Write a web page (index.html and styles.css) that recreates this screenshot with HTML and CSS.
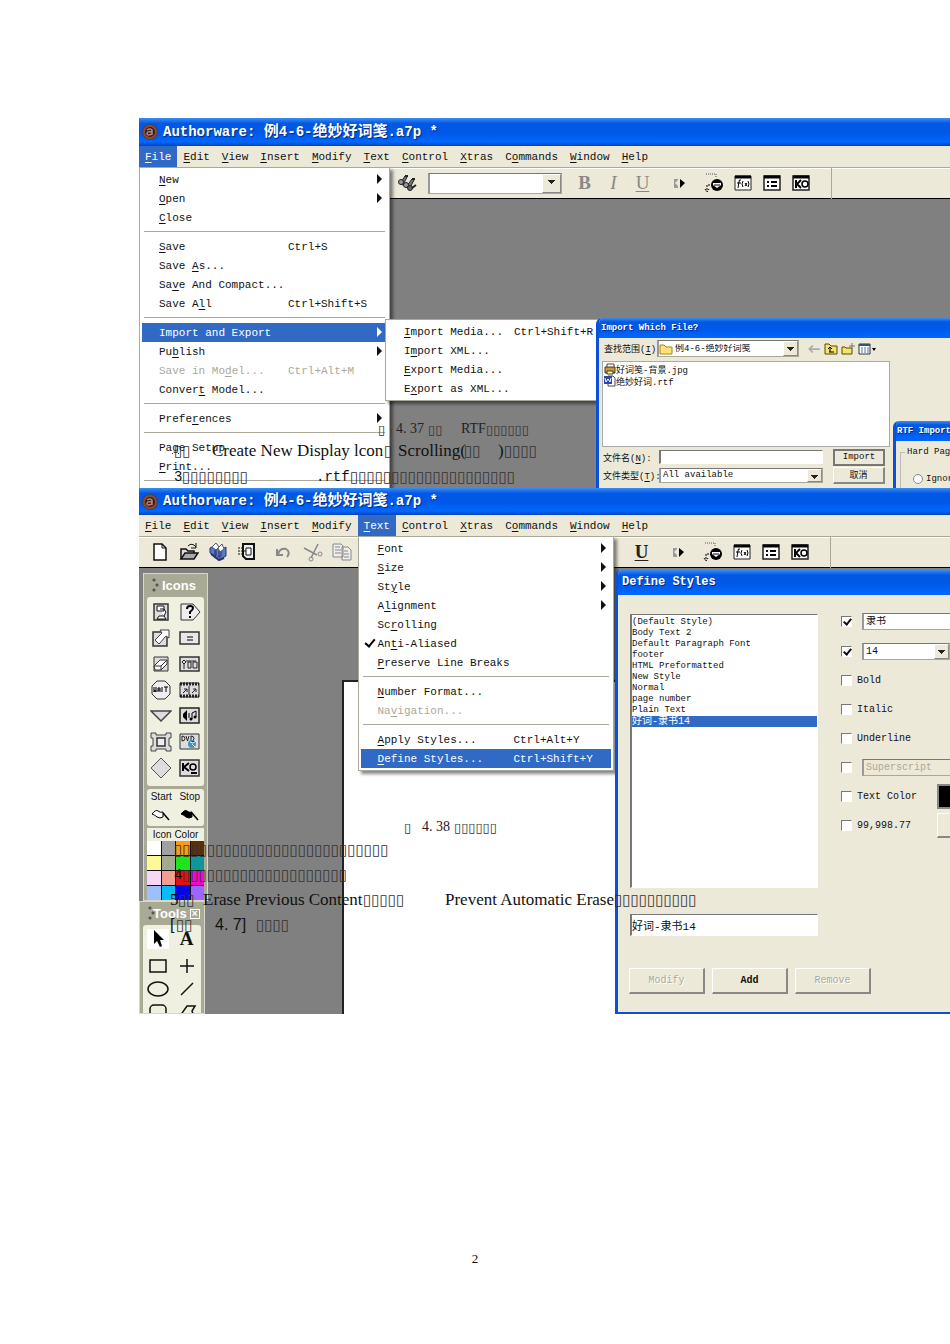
FILE: index.html
```
<!DOCTYPE html>
<html lang="zh-CN">
<head>
<meta charset="utf-8">
<title>Authorware</title>
<link rel="stylesheet" href="styles.css">
</head>
<body>
<svg class="defs" aria-hidden="true">
  <defs>
    <symbol id="logo" viewBox="0 0 18 18"><circle cx="9" cy="9" r="8" fill="#47414e"/><circle cx="9" cy="9" r="6" fill="#2b2024" stroke="#8a4a3c" stroke-width="2"/><path d="M6 7q3-2 5 0v5M11 9q-5-1-5 1.500t5 .5" fill="none" stroke="#c9826c" stroke-width="1.500"/></symbol>
    <symbol id="styles" viewBox="0 0 20 20"><path d="M3 11l5-8 2 1-4 8zM9 14l6-8 2 1-4 8z" fill="#777" stroke="#222"/><circle cx="4" cy="9" r="2.500" fill="#999" stroke="#222"/><circle cx="9" cy="12" r="2.500" fill="#999" stroke="#222"/><circle cx="13" cy="15" r="2.500" fill="#666" stroke="#222"/><path d="M8 3h3M15 6h3M15 15l4-3" stroke="#222" stroke-width="2"/></symbol>
    <symbol id="play" viewBox="0 0 16 14"><path d="M2 3h4v9H2z" fill="#999"/><path d="M7 3L3 7l4 4z" fill="#ece9d8"/><path d="M8 3l5 4-5 5z" fill="#000"/></symbol>
    <symbol id="flow" viewBox="0 0 20 20"><path d="M2 1h10v3" fill="none" stroke="#555" stroke-dasharray="1 1"/><path d="M3 12v6M1 16l2 3 2-3M4 12h3" fill="none" stroke="#000" stroke-dasharray="2 1"/><circle cx="13" cy="12" r="6" fill="#000"/><path d="M9 10h8v2l-4 3-4-3z" fill="#fff"/><path d="M10 12h6" stroke="#000"/></symbol>
    <symbol id="fx" viewBox="0 0 18 16"><path d="M1 1h16v14H1z" fill="#fff" stroke="#222"/><path d="M1 2h16" stroke="#000" stroke-width="3"/><path d="M7 5q-2-1-2 2l-1 6M3 8h4M9 6q-2 3 0 6M14 6q2 3 0 6M11 8l2 3M13 8l-2 3" fill="none" stroke="#000"/></symbol>
    <symbol id="vars" viewBox="0 0 18 16"><path d="M1 1h16v14H1z" fill="#fff" stroke="#222" stroke-width="1.500"/><path d="M1 2h16" stroke="#000" stroke-width="3"/><path d="M4 7h2M4 11h2M8 7h6M8 11h6" stroke="#000" stroke-width="2"/></symbol>
    <symbol id="ko" viewBox="0 0 18 16"><path d="M1 1h16v14H1z" fill="#fff" stroke="#222" stroke-width="1.500"/><path d="M1 2h16" stroke="#000" stroke-width="3"/><path d="M4 5v8M9 5L5 9l4 4" fill="none" stroke="#000" stroke-width="2"/><circle cx="13" cy="9" r="3" fill="none" stroke="#000" stroke-width="1.500"/></symbol>
    <symbol id="new" viewBox="0 0 20 20"><path d="M4 2h8l4 4v12H4z" fill="#fff" stroke="#111" stroke-width="1.500"/><path d="M12 2v4h4" fill="none" stroke="#111"/></symbol>
    <symbol id="open" viewBox="0 0 20 20"><path d="M2 17V7h5l2 2h6v3" fill="#ddd" stroke="#111" stroke-width="1.500"/><path d="M2 17l4-6h13l-4 6z" fill="#aaa" stroke="#111" stroke-width="1.500"/><path d="M9 4q4-4 8 1M17 1v5h-5" fill="none" stroke="#111"/></symbol>
    <symbol id="save" viewBox="0 0 20 20"><path d="M2 6l6-3v11l-6-3zM7 8l6-4v10l-6 2zM11 9l7-4v9l-7 4z" fill="#5b78c4" stroke="#26386f"/><path d="M4 5l4-4 3 4-3 3zM10 6l4-4 2 5-4 3z" fill="#fff" stroke="#557"/><path d="M3 12l8 6 5-2" fill="none" stroke="#26386f" stroke-width="2"/></symbol>
    <symbol id="import" viewBox="0 0 20 20"><path d="M6 2h11v15H9l-3-3z" fill="#eee" stroke="#111" stroke-width="2"/><path d="M9 6h5v7H9z" fill="#fff" stroke="#111"/><path d="M1 6h6M1 9h8M1 12h6" stroke="#111" stroke-dasharray="2 1"/></symbol>
    <symbol id="undo" viewBox="0 0 20 20"><path d="M4 12q2-6 8-5 5 3 1 8M3 7v6h6" fill="none" stroke="#888" stroke-width="2"/></symbol>
    <symbol id="cut" viewBox="0 0 20 20"><path d="M1 6l13 7M8 16l7-14" stroke="#888" stroke-width="1.500"/><circle cx="17" cy="12" r="2" fill="none" stroke="#888"/><circle cx="8" cy="17" r="2" fill="none" stroke="#888"/></symbol>
    <symbol id="copy" viewBox="0 0 20 20"><path d="M1 2h8l2 2v11H1zM10 5h6l3 3v10h-9z" fill="#eee" stroke="#888"/><path d="M3 5h5M3 8h6M3 11h6M12 9h4M12 12h5M12 15h5" stroke="#888"/></symbol>
    <symbol id="i-display" viewBox="0 0 22 20"><path d="M4 2h14v16H4z" fill="#ddd" stroke="#333" stroke-width="1.500"/><path d="M7 4h7v5H7zM10 7h4l2 3-2 4H9l-2 3h9l-2-3" fill="#fff" stroke="#111"/></symbol>
    <symbol id="i-ask" viewBox="0 0 22 20"><path d="M2 2h12l7 8-7 8H2z" fill="#eee" stroke="#333"/><path d="M8 7q0-3 3-3t3 2q0 2-3 4v2M11 14v2" fill="none" stroke="#000" stroke-width="2"/></symbol>
    <symbol id="i-motion" viewBox="0 0 22 20"><path d="M3 4h14v14H3z" fill="#ddd" stroke="#333" stroke-width="1.500"/><path d="M5 12l7-7-2-3h9v8l-3-2-7 8z" fill="#fff" stroke="#444"/></symbol>
    <symbol id="i-calc" viewBox="0 0 22 20"><path d="M1 4h19v12H1z" fill="#e8e8e8" stroke="#333" stroke-width="1.500"/><path d="M8 9h6M8 12h6" stroke="#000"/></symbol>
    <symbol id="i-erase" viewBox="0 0 22 20"><path d="M4 3h14v14H4z" fill="#ddd" stroke="#333"/><path d="M4 12l6-6h7v4l-6 6H5z" fill="#fff" stroke="#333"/><path d="M4 12h7l6-6M11 12v4" fill="none" stroke="#333"/></symbol>
    <symbol id="i-map" viewBox="0 0 22 20"><path d="M1 3h19v14H1z" fill="#ddd" stroke="#333" stroke-width="1.500"/><path d="M3 8l2-2 2 2-2 2zM5 10v5M9 8h3v6H9zM14 8h4v6h-4zM7 7h10" fill="none" stroke="#222"/></symbol>
    <symbol id="i-wait" viewBox="0 0 22 20"><path d="M7 1h8l5 5v8l-5 5H7l-5-5V6z" fill="#eee" stroke="#333"/><path d="M4 7v5l1-2 1 2V7M8 12V8h2v4M8 10h2M12 7v5M16 7v5M14 7h4" fill="none" stroke="#000"/></symbol>
    <symbol id="i-movie" viewBox="0 0 22 20"><path d="M1 3h19v14H1z" fill="#ddd" stroke="#222"/><path d="M1 4h19M1 16h19" stroke="#222" stroke-width="3" stroke-dasharray="2 1"/><path d="M10 6v9M4 13l4-4M5 9h3v3M13 13l4-4M14 9h3v3" fill="none" stroke="#222"/></symbol>
    <symbol id="i-nav" viewBox="0 0 22 20"><path d="M1 5h20L11 15z" fill="#ddd" stroke="#444" stroke-width="1.500"/></symbol>
    <symbol id="i-sound" viewBox="0 0 22 20"><path d="M1 2h19v15H1z" fill="#ddd" stroke="#222" stroke-width="1.500"/><path d="M4 8l4-4v11l-4-4z" fill="#000"/><path d="M10 7v5M13 13V7l4-2v6" fill="none" stroke="#000"/><circle cx="12" cy="13" r="1.500"/><circle cx="16" cy="11" r="1.500"/></symbol>
    <symbol id="i-frame" viewBox="0 0 22 20"><path d="M1 1h5v2h10V1h5v5h-2v8h2v5h-5v-2H6v2H1v-5h2V6H1z" fill="#ddd" stroke="#444"/><path d="M7 6h8v8H7z" fill="#eee" stroke="#333" stroke-width="1.500"/></symbol>
    <symbol id="i-dvd" viewBox="0 0 22 20"><path d="M1 2h19v15H1z" fill="#ddd" stroke="#333"/><path d="M3 4v5q3 0 3-2.500T3 4M7 4l1.500 5L10 4M12 4v5q3 0 3-2.500T12 4" fill="none" stroke="#222"/><circle cx="13" cy="12" r="4" fill="#3998c3"/><path d="M11 10l3 1 3-2M13 12l3 3" stroke="#fff"/></symbol>
    <symbol id="i-decide" viewBox="0 0 22 20"><path d="M11 0l10 10-10 10L1 10z" fill="#ddd" stroke="#555"/></symbol>
    <symbol id="i-ko" viewBox="0 0 22 20"><path d="M1 2h19v16H1z" fill="#ddd" stroke="#333" stroke-width="1.500"/><path d="M4 5v8M10 5L5 9l5 4M12 15h6" fill="none" stroke="#000" stroke-width="2"/><circle cx="14" cy="9" r="3" fill="none" stroke="#000" stroke-width="1.500"/></symbol>
    <symbol id="flag" viewBox="0 0 22 14"><path d="M2 6q4-5 6-3 2 2 5 1v5q-3 2-6 0-2-2-5-3z" stroke="#000"/><path d="M13 5l6 7" stroke="#000" stroke-width="1.500"/></symbol>
    <symbol id="t-arrow" viewBox="0 0 22 20"><path d="M7 1v14l3-3 3 6 2-1-2-6h4z" fill="#000"/></symbol>
    <symbol id="t-rect" viewBox="0 0 22 20"><path d="M3 4h16v12H3z" fill="none" stroke="#111" stroke-width="1.500"/></symbol>
    <symbol id="t-plus" viewBox="0 0 22 20"><path d="M4 10h14M11 3v14" stroke="#111" stroke-width="1.500"/></symbol>
    <symbol id="t-oval" viewBox="0 0 22 20"><ellipse cx="11" cy="10" rx="10" ry="7" fill="none" stroke="#111" stroke-width="1.500"/></symbol>
    <symbol id="t-line" viewBox="0 0 22 20"><path d="M5 16L17 4" stroke="#111" stroke-width="1.500"/></symbol>
    <symbol id="t-round" viewBox="0 0 22 20"><rect x="3" y="4" width="16" height="14" rx="4" fill="none" stroke="#111" stroke-width="1.500"/></symbol>
    <symbol id="t-poly" viewBox="0 0 22 20"><path d="M4 15L11 5h8l-3 5 3 8H5" fill="none" stroke="#111" stroke-width="1.500"/></symbol>
    <symbol id="folder" viewBox="0 0 14 12"><path d="M1 11V2h4l2 2h6v7z" fill="#ffe37a" stroke="#a98218"/></symbol>
    <symbol id="up" viewBox="0 0 14 12"><path d="M1 11V1h4l2 2h6v8z" fill="#f5e46b" stroke="#554a00"/><path d="M5 9h5M6 9V5M4 6l2-2 2 2" fill="none" stroke="#000"/></symbol>
    <symbol id="newdir" viewBox="0 0 14 12"><path d="M1 11V4h3l1 1h6v6z" fill="#f5e46b" stroke="#554a00"/><path d="M11 0v6M8 3h6" stroke="#776"/></symbol>
    <symbol id="back" viewBox="0 0 12 10"><path d="M11 5H2M5 2L2 5l3 3" fill="none" stroke="#aaa" stroke-width="1.500"/></symbol>
    <symbol id="view" viewBox="0 0 18 12"><path d="M1 1h11v10H1z" fill="#fff" stroke="#333"/><path d="M1 2h11" stroke="#357" stroke-width="2"/><path d="M3 5h8M3 7h8M3 9h8" stroke="#57a" stroke-dasharray="2 1"/><path d="M14 5h4l-2 3z"/></symbol>
    <symbol id="jpg" viewBox="0 0 12 12"><path d="M3 1h7v4H3z" fill="#fff" stroke="#543"/><path d="M1 4h10v6H1z" fill="#c69a3a" stroke="#432"/><path d="M3 8h6v3H3z" fill="#ff9" stroke="#432"/></symbol>
    <symbol id="rtf" viewBox="0 0 12 12"><path d="M4 1h5l2 2v8H4z" fill="#fff" stroke="#446"/><path d="M0 1h8v8H0z" fill="#2847a8"/><path d="M1 3l1 4 2-3 2 3 1-4" fill="none" stroke="#fff"/></symbol>
  </defs>
</svg>

<main class="sheet">
  <section class="figure">
    <div class="app app-import">
      <header class="titlebar"><svg class="logo"><use href="#logo"/></svg><h2>Authorware: <span class="zh">例</span>4-6-<span class="zh">绝妙好词笺</span>.a7p *</h2></header>
      <nav class="menubar">
        <div class="entry"><button class="top on"><u>F</u>ile</button>
          <div class="menu file-menu">
            <button class="item more"><span><u>N</u>ew</span></button>
            <button class="item more"><span><u>O</u>pen</span></button>
            <button class="item"><span><u>C</u>lose</span></button>
            <hr>
            <button class="item"><span><u>S</u>ave</span><kbd>Ctrl+S</kbd></button>
            <button class="item"><span>Save <u>A</u>s...</span></button>
            <button class="item"><span>Sa<u>v</u>e And Compact...</span></button>
            <button class="item"><span>Save A<u>l</u>l</span><kbd>Ctrl+Shift+S</kbd></button>
            <hr>
            <div class="entry">
              <button class="item more on"><span>Import and Export</span></button>
              <div class="menu submenu">
                <button class="item"><span><u>I</u>mport Media...</span><kbd>Ctrl+Shift+R</kbd></button>
                <button class="item"><span>I<u>m</u>port XML...</span></button>
                <button class="item"><span><u>E</u>xport Media...</span></button>
                <button class="item"><span>E<u>x</u>port as XML...</span></button>
              </div>
            </div>
            <button class="item more"><span>Pu<u>b</u>lish</span></button>
            <button class="item" disabled><span>Save in Mo<u>d</u>el...</span><kbd>Ctrl+Alt+M</kbd></button>
            <button class="item"><span>Conver<u>t</u> Model...</span></button>
            <hr>
            <button class="item more"><span>Prefe<u>r</u>ences</span></button>
            <hr>
            <button class="item"><span>Pa<u>g</u>e Setup</span></button>
            <button class="item"><span><u>P</u>rint...</span></button>
            <hr>
          </div>
        </div>
        <button class="top"><u>E</u>dit</button><button class="top"><u>V</u>iew</button><button class="top"><u>I</u>nsert</button><button class="top"><u>M</u>odify</button><button class="top"><u>T</u>ext</button><button class="top"><u>C</u>ontrol</button><button class="top"><u>X</u>tras</button><button class="top">C<u>o</u>mmands</button><button class="top"><u>W</u>indow</button><button class="top"><u>H</u>elp</button>
      </nav>
      <div class="toolbar">
        <div class="file-tools"></div>
        <button class="tool wide" aria-label="Styles"><svg><use href="#styles"/></svg></button>
        <span class="combo style-combo"><select aria-label="Style"><option></option></select></span>
        <button class="tool letter dim"><b>B</b></button><button class="tool letter dim"><i>I</i></button><button class="tool letter dim"><u>U</u></button>
        <div class="run-tools">
          <button class="tool first" aria-label="Restart"><svg><use href="#play"/></svg></button><button class="tool" aria-label="Control panel"><svg><use href="#flow"/></svg></button><button class="tool" aria-label="Functions"><svg><use href="#fx"/></svg></button><button class="tool" aria-label="Variables"><svg><use href="#vars"/></svg></button><button class="tool" aria-label="Knowledge objects"><svg><use href="#ko"/></svg></button>
        </div>
      </div>
      <div class="workspace">
        <section class="dialog import-dialog">
          <h3>Import Which File?</h3>
          <div class="import-body">
            <div class="look-row"><label for="look">查找范围(<u>I</u>):</label>
              <span class="combo look-combo"><svg><use href="#folder"/></svg><select id="look"><option>例4-6-绝妙好词笺</option></select></span>
              <button class="mini" aria-label="Back"><svg><use href="#back"/></svg></button><button class="mini" aria-label="Up"><svg><use href="#up"/></svg></button><button class="mini" aria-label="New folder"><svg><use href="#newdir"/></svg></button><button class="mini" aria-label="View"><svg><use href="#view"/></svg></button>
            </div>
            <ul class="files"><li><svg><use href="#jpg"/></svg>好词笺-背景.jpg</li><li><svg><use href="#rtf"/></svg>绝妙好词.rtf</li></ul>
            <div class="name-grid">
              <label for="fname">文件名(<u>N</u>):</label><input id="fname" class="field" type="text"><button class="push default">Import</button>
              <label for="ftype">文件类型(<u>T</u>):</label><span class="combo"><select id="ftype"><option>All available</option></select></span><button class="push">取消</button>
            </div>
          </div>
        </section>
        <section class="dialog rtf-dialog">
          <h3>RTF Import</h3>
          <fieldset><legend>Hard Page</legend><label class="radio"><input type="radio" name="brk">Ignore</label></fieldset>
        </section>
      </div>
    </div>
    <p class="line caption c437"><span class="box">▯</span><span>4. 37</span><span class="box">▯▯</span><span>RTF</span><span class="box">▯▯▯▯▯▯</span></p>
    <p class="line body l-create"><span class="box">▯▯</span><span>Create New Display lcon</span><span class="box">▯</span><span>Scrolling(</span><span class="box">▯▯</span><span>)</span><span class="box">▯▯▯▯</span></p>
    <p class="line body l-rtf"><span class="mono">3</span><span class="box">▯▯▯▯▯▯▯▯</span><span class="mono">.rtf</span><span class="box">▯▯▯▯▯▯▯▯▯▯▯▯▯▯▯▯▯▯▯▯</span></p>
  </section>

  <section class="figure">
    <div class="app app-styles">
      <header class="titlebar"><svg class="logo"><use href="#logo"/></svg><h2>Authorware: <span class="zh">例</span>4-6-<span class="zh">绝妙好词笺</span>.a7p *</h2></header>
      <nav class="menubar">
        <button class="top"><u>F</u>ile</button><button class="top"><u>E</u>dit</button><button class="top"><u>V</u>iew</button><button class="top"><u>I</u>nsert</button><button class="top"><u>M</u>odify</button>
        <div class="entry"><button class="top on"><u>T</u>ext</button>
          <div class="menu text-menu">
            <button class="item more"><span><u>F</u>ont</span></button>
            <button class="item more"><span><u>S</u>ize</span></button>
            <button class="item more"><span>St<u>y</u>le</span></button>
            <button class="item more"><span>A<u>l</u>ignment</span></button>
            <button class="item"><span>Sc<u>r</u>olling</span></button>
            <button class="item ticked"><span>An<u>t</u>i-Aliased</span></button>
            <button class="item"><span><u>P</u>reserve Line Breaks</span></button>
            <hr>
            <button class="item"><span><u>N</u>umber Format...</span></button>
            <button class="item" disabled><span>Na<u>v</u>igation...</span></button>
            <hr>
            <button class="item"><span><u>A</u>pply Styles...</span><kbd>Ctrl+Alt+Y</kbd></button>
            <button class="item on"><span><u>D</u>efine Styles...</span><kbd>Ctrl+Shift+Y</kbd></button>
          </div>
        </div>
        <button class="top"><u>C</u>ontrol</button><button class="top"><u>X</u>tras</button><button class="top">C<u>o</u>mmands</button><button class="top"><u>W</u>indow</button><button class="top"><u>H</u>elp</button>
      </nav>
      <div class="toolbar">
        <div class="file-tools">
          <button class="tool" aria-label="New"><svg><use href="#new"/></svg></button><button class="tool" aria-label="Open"><svg><use href="#open"/></svg></button><button class="tool" aria-label="Save all"><svg><use href="#save"/></svg></button><button class="tool" aria-label="Import"><svg><use href="#import"/></svg></button><button class="tool gap" aria-label="Undo"><svg><use href="#undo"/></svg></button><button class="tool" aria-label="Cut"><svg><use href="#cut"/></svg></button><button class="tool" aria-label="Copy"><svg><use href="#copy"/></svg></button>
        </div>
        <div class="under-menu"></div>
        <button class="tool letter strong"><u>U</u></button>
        <div class="run-tools">
          <button class="tool first" aria-label="Restart"><svg><use href="#play"/></svg></button><button class="tool" aria-label="Control panel"><svg><use href="#flow"/></svg></button><button class="tool" aria-label="Functions"><svg><use href="#fx"/></svg></button><button class="tool" aria-label="Variables"><svg><use href="#vars"/></svg></button><button class="tool" aria-label="Knowledge objects"><svg><use href="#ko"/></svg></button>
        </div>
      </div>
      <div class="workspace">
        <div class="canvas"></div>
        <aside class="palette icons">
          <h4>Icons</h4>
          <div class="cells">
            <svg><use href="#i-display"/></svg><svg><use href="#i-ask"/></svg>
            <svg><use href="#i-motion"/></svg><svg><use href="#i-calc"/></svg>
            <svg><use href="#i-erase"/></svg><svg><use href="#i-map"/></svg>
            <svg><use href="#i-wait"/></svg><svg><use href="#i-movie"/></svg>
            <svg><use href="#i-nav"/></svg><svg><use href="#i-sound"/></svg>
            <svg><use href="#i-frame"/></svg><svg><use href="#i-dvd"/></svg>
            <svg><use href="#i-decide"/></svg><svg><use href="#i-ko"/></svg>
          </div>
          <div class="flags"><span>Start</span><span>Stop</span><svg class="white"><use href="#flag"/></svg><svg><use href="#flag"/></svg></div>
          <div class="colour-title">Icon Color</div>
          <div class="colours"><i class="k1"></i><i class="k2"></i><i class="k3"></i><i class="k4"></i><i class="k5"></i><i class="k6"></i><i class="k7"></i><i class="k8"></i><i class="k9"></i><i class="k10"></i><i class="k11"></i><i class="k12"></i><i class="k13"></i><i class="k14"></i><i class="k15"></i><i class="k16"></i></div>
        </aside>
        <aside class="palette tools">
          <h4>Tools<button class="close" aria-label="Close">×</button></h4>
          <div class="cells">
            <svg class="picked"><use href="#t-arrow"/></svg><b class="letter-tool">A</b>
            <svg><use href="#t-rect"/></svg><svg><use href="#t-plus"/></svg>
            <svg><use href="#t-oval"/></svg><svg><use href="#t-line"/></svg>
            <svg><use href="#t-round"/></svg><svg><use href="#t-poly"/></svg>
          </div>
        </aside>
        <section class="dialog define-dialog">
          <h3>Define Styles</h3>
          <div class="define-body">
            <div class="left">
              <ul class="style-list"><li>(Default Style)</li><li>Body Text 2</li><li>Default Paragraph Font</li><li>footer</li><li>HTML Preformatted</li><li>New Style</li><li>Normal</li><li>page number</li><li>Plain Text</li><li class="on">好词-隶书14</li></ul>
              <input class="field style-name" type="text" aria-label="Style name" value="好词-隶书14">
            </div>
            <div class="options">
              <div class="opt"><input type="checkbox" checked aria-label="Use font"><span class="combo"><select aria-label="Font"><option>隶书</option></select></span></div>
              <div class="opt"><input type="checkbox" checked aria-label="Use size"><span class="combo size"><select aria-label="Size"><option>14</option></select></span></div>
              <label class="opt"><input type="checkbox">Bold</label>
              <label class="opt"><input type="checkbox">Italic</label>
              <label class="opt"><input type="checkbox">Underline</label>
              <div class="opt"><input type="checkbox" aria-label="Use script"><span class="combo off"><select disabled aria-label="Script"><option>Superscript</option></select></span></div>
              <div class="opt"><label><input type="checkbox">Text Color</label><span class="swatch"></span></div>
              <div class="opt"><label><input type="checkbox">99,998.77</label><button class="push fmt" aria-label="Format"></button></div>
            </div>
          </div>
          <div class="buttons"><button class="push" disabled>Modify</button><button class="push strong">Add</button><button class="push" disabled>Remove</button></div>
        </section>
      </div>
    </div>
    <p class="line caption c438"><span class="box">▯</span><span>4. 38</span><span class="box">▯▯▯▯▯▯</span></p>
    <p class="line body l-a"><span class="box">▯▯▯▯▯▯▯▯▯▯▯▯▯▯▯▯▯▯▯▯▯▯▯▯▯▯</span></p>
    <p class="line body l-b"><span class="mono">4</span><span class="box">▯▯▯▯▯▯▯▯▯▯▯▯▯▯▯▯▯▯▯▯</span></p>
    <p class="line body l-c"><span>5</span><span class="box">▯▯</span><span>Erase Previous Content</span><span class="box">▯▯▯▯▯</span><span>Prevent Automatic Erase</span><span class="box">▯▯▯▯▯▯▯▯▯▯</span></p>
    <p class="line body l-d"><span class="sans">[</span><span class="box">▯▯</span><span class="sans">4. 7]</span><span class="box">▯▯▯▯</span></p>
  </section>
  <footer class="folio">2</footer>
</main>
</body>
</html>
```
FILE: styles.css
```
* { box-sizing: border-box; }
body { margin: 0; background: #fff; color: #111; font-family: "Liberation Mono", "Noto Sans CJK SC", monospace; font-size: 11px; }
button, input, select { font: inherit; color: inherit; margin: 0; padding: 0; border: 0; background: none; border-radius: 0; }
h2, h3, h4, p, ul, fieldset { margin: 0; padding: 0; border: 0; }
ul { list-style: none; }
u { text-underline-offset: 2px; }
.defs { position: absolute; width: 0; height: 0; }
.sheet { padding: 118px 0 0 139px; overflow: hidden; }
.figure { position: relative; }
.app { position: relative; overflow: hidden; display: flex; flex-direction: column; background: #ece9d8; }
.app-import { min-height: 370px; }
.app-styles { min-height: 526px; }

.titlebar { display: flex; align-items: center; gap: 4px; height: 28px; padding-left: 2px; color: #fff; background: linear-gradient(#3b8df2, #0058e4 20%, #0058e8 55%, #0068ff 85%, #0044bb); }
.logo { width: 18px; height: 18px; }
.titlebar h2 { font-size: 14px; line-height: 20px; white-space: pre; text-shadow: 1px 1px 1px #002a80; }
.titlebar .zh { font-size: 15px; }
.app-styles .titlebar { height: 27px; }

.menubar { display: flex; height: 21px; }
.entry { position: relative; }
.top { height: 21px; padding: 0 6px; }
.top.on { background: #316ac5; color: #fff; }
.menu { position: absolute; z-index: 2; padding: 2px; background: #fff; border: 1px solid #aca899; box-shadow: 3px 3px 3px #0007; }
.file-menu { top: 21px; left: 0; width: 251px; }
.text-menu { top: 21px; left: 0; width: 256px; }
.submenu { top: -4px; left: 243px; width: 214px; }
.item { position: relative; display: grid; grid-template-columns: 129px 1fr; align-items: center; width: 100%; height: 19px; padding-left: 17px; text-align: left; white-space: pre; }
.text-menu .item { grid-template-columns: 136px 1fr; }
.submenu .item { grid-template-columns: 110px 1fr; padding-left: 16px; }
.item kbd { font: inherit; }
.item.on { background: #316ac5; color: #fff; }
.item:disabled { color: #aca899; }
.more::after { content: ""; position: absolute; right: 5px; top: 4px; border: 5px solid transparent; border-left-color: currentColor; border-right-width: 0; }
.ticked::before { content: ""; position: absolute; left: 6px; top: 3px; width: 4px; height: 8px; border: solid #000; border-width: 0 2px 2px 0; transform: rotate(40deg); }
.menu hr { height: 1px; margin: 4px 2px 5px; border: 0; background: #aca899; }

.toolbar { display: flex; align-items: center; height: 32px; border-top: 1px solid #aca899; border-bottom: 1px solid #000; box-shadow: inset 0 1px #fff; }
.file-tools { display: flex; flex: none; width: 251px; padding-left: 6px; }
.tool { display: grid; place-items: center; flex: none; width: 29px; height: 28px; }
.tool svg { width: 20px; height: 20px; }
.tool.wide { width: 34px; }
.tool.gap { margin-left: 8px; }
.tool.letter { font: 19px "Liberation Serif", serif; }
.tool.dim { color: #888; }
.tool.strong { color: #222; font-weight: bold; }
.under-menu { flex: none; width: 237px; }
.run-tools { display: flex; flex: none; width: 167px; height: 31px; align-items: center; margin-left: 8px; border-right: 1px solid #aca899; }
.run-tools .tool svg { width: 18px; height: 16px; }
.run-tools .tool:nth-child(2) svg { width: 20px; height: 20px; }
.run-tools .tool:nth-child(2) { width: 28px; }
.run-tools .first { margin-right: 6px; }
.run-tools .first svg { width: 16px; height: 14px; }
.combo { position: relative; display: flex; align-items: center; min-width: 0; height: 17px; background: #fff; border: 1px solid #aca899; border-top-color: #777; border-left: 2px solid #999; }
.combo select { flex: 1; min-width: 0; height: 100%; padding-left: 2px; appearance: none; opacity: 1; }
.combo::after { content: ""; width: 13px; align-self: stretch; flex: none; background: linear-gradient(#222, #222) center 5px / 7px 1px no-repeat, linear-gradient(#222, #222) center 6px / 5px 1px no-repeat, linear-gradient(#222, #222) center 7px / 3px 1px no-repeat, linear-gradient(#222, #222) center 8px / 1px 1px no-repeat, #ece9d8; border: 1px solid #888; border-left-color: #fff; border-top-color: #fff; }
.style-combo { flex: none; width: 134px; height: 21px; margin: 0 8px 0 4px; }
.style-combo::after { width: 17px; }

.workspace { position: relative; flex: 1; background: #808080; }
.dialog { position: absolute; z-index: 3; background: #ece9d8; border-left: 3px solid #0a50d8; border-radius: 6px 0 0 0; overflow: hidden; }
.dialog h3 { color: #fff; background: linear-gradient(#3b8df2, #0058e4 20%, #0058e8 55%, #0068ff); white-space: pre; text-shadow: 1px 1px #002a80; }
.import-dialog { left: 457px; right: 0; top: 119px; bottom: 0; font-size: 9px; }
.import-dialog h3, .rtf-dialog h3 { font-size: 9px; line-height: 20px; padding-left: 2px; }
.import-body { padding: 2px 0 0 3px; }
.look-row { display: flex; align-items: center; height: 17px; gap: 3px; padding-left: 2px; }
.look-row label { width: 50px; white-space: nowrap; }
.look-combo { width: 142px; margin-right: 5px; }
.look-combo svg { width: 14px; height: 12px; }
.mini { width: 14px; height: 14px; }
.mini svg { display: block; width: 14px; height: 12px; }
.mini:last-child { width: 18px; }
.mini:last-child svg { width: 18px; }
.files { width: 288px; height: 86px; margin-top: 4px; padding: 1px; background: #fff; border: 1px solid #aaa; }
.files li { display: flex; align-items: center; height: 12px; white-space: nowrap; }
.files svg { width: 12px; height: 12px; }
.name-grid { display: grid; grid-template-columns: 53px 164px 52px; grid-template-rows: 16px 16px; column-gap: 3px; row-gap: 2px; align-items: center; padding: 2px 0 0 1px; }
.name-grid label { white-space: nowrap; }
.name-grid .combo { height: 15px; }
.name-grid .push { margin-left: 7px; width: 52px; height: 17px; font-size: 9px; }
.field { min-width: 0; height: 14px; background: #fff; border: 1px solid #fff; border-top-color: #777; border-left: 2px solid #777; }
.push { background: #ece9d8; border: 1px solid #fff; border-right: 2px solid #888; border-bottom: 2px solid #888; }
.push:disabled { color: #aca899; text-shadow: 1px 1px #fff; }
.push.default { border: 2px solid #777; }
.rtf-dialog { left: 754px; right: 0; top: 222px; bottom: 0; font-size: 9px; }
.rtf-dialog h3 { padding-left: 1px; }
.rtf-dialog fieldset { margin: 6px 0 0 4px; height: 80px; border: 1px solid #bbb; white-space: nowrap; }
.rtf-dialog legend { margin-left: 4px; }
.radio { display: flex; align-items: center; gap: 3px; margin: 17px 0 0 12px; }
.radio input { appearance: none; width: 10px; height: 10px; border-radius: 50%; background: #fff; border: 1px solid #888; }

.canvas { position: absolute; left: 203px; top: 112px; right: 0; bottom: 0; background: #fff; border: 1px solid #222; border-width: 2px 0 0 2px; }
.palette { position: absolute; background: #a9aa96; border: 1px solid #d8d8c8; font-family: "Liberation Sans", sans-serif; }
.palette h4 { display: flex; align-items: center; height: 23px; padding-left: 16px; color: #fff; font-size: 13px; background: radial-gradient(circle, #555 1px, transparent 2px) 4px 3px / 6px 6px no-repeat, radial-gradient(circle, #555 1px, transparent 2px) 7px 8px / 6px 6px no-repeat, radial-gradient(circle, #555 1px, transparent 2px) 4px 13px / 6px 6px no-repeat; }
.icons { left: 4px; top: 5px; width: 65px; padding: 0 3px; }
.icons h4 { padding-left: 15px; }
.cells { display: grid; grid-template-columns: 1fr 1fr; justify-items: center; align-items: center; grid-auto-rows: 26px; background: #f0f0e1; border-radius: 3px; }
.cells svg { width: 22px; height: 20px; }
.icons .cells { padding: 2px 0 5px; }
.flags { display: grid; grid-template-columns: 1fr 1fr; justify-items: center; align-items: center; grid-template-rows: 15px 22px; margin-top: 3px; background: #f0f0e1; font-size: 10px; border-radius: 3px; }
.flags svg { width: 22px; height: 14px; }
.flags .white { fill: #fff; }
.colour-title { margin-top: 2px; height: 13px; line-height: 13px; font-size: 10px; text-align: center; background: #f0f0e1; white-space: nowrap; }
.colours { display: grid; grid-template-columns: repeat(4, 1fr); grid-auto-rows: 14px; gap: 1px; background: #111; }
.k1 { background: #fff; } .k2 { background: #a0a0a0; } .k3 { background: #fb9a18; } .k4 { background: #5c2e0e; }
.k5 { background: #fdf99b; } .k6 { background: #a4aa92; } .k7 { background: #1ee31e; } .k8 { background: #0b979c; }
.k9 { background: #f7d7f8; } .k10 { background: #f29c94; } .k11 { background: #e01212; } .k12 { background: #fb06c8; }
.k13 { background: #9dc0fb; } .k14 { background: #06bdf8; } .k15 { background: #0404e4; } .k16 { background: #9a66fb; }
.tools { left: 0; top: 333px; bottom: 0; width: 66px; padding: 0 3px; overflow: hidden; }
.tools h4 { padding-left: 10px; gap: 3px; }
.close { width: 10px; height: 10px; border: 1px solid #fff; font-size: 10px; line-height: 8px; }
.tools .cells { grid-template-rows: 28px 25px 22px 22px; grid-auto-rows: 22px; padding-bottom: 9px; }
.picked { background: #fff; }
.letter-tool { font: bold 19px "Liberation Serif", serif; }

.define-dialog { left: 476px; right: 0; top: 2px; bottom: 0; border-bottom: 2px solid #0a50d8; }
.define-dialog h3 { font-size: 12px; line-height: 25px; padding-left: 4px; }
.define-body { display: flex; gap: 23px; padding: 16px 0 0 12px; }
.left { display: flex; flex-direction: column; gap: 26px; flex: none; width: 188px; padding-top: 3px; }
.style-list { height: 274px; padding: 2px 0; background: #fff; border: 1px solid #fff; border-top-color: #777; border-left: 2px solid #777; font-size: 9px; }
.style-list li { height: 11px; line-height: 11px; white-space: pre; }
.style-list .on { background: #316ac5; color: #fff; font-size: 10px; }
.style-name { height: 22px; width: 100%; font-size: 11px; }
.options { flex: 1; min-width: 0; font-size: 10px; }
.opt { display: flex; align-items: center; height: 29px; white-space: nowrap; }
.options .opt:first-child { height: 20px; margin-bottom: 6px; }
.opt .combo { flex: none; width: 110px; margin-left: 5px; }
.opt .combo.size { width: 88px; }
.opt label { display: flex; align-items: center; flex: none; width: 96px; }
.opt input { appearance: none; flex: none; position: relative; width: 11px; height: 11px; margin-right: 5px; background: #fff; border: 1px solid #fff; border-top-color: #777; border-left-color: #777; }
.opt input:checked::after { content: ""; position: absolute; left: 3px; top: 0; width: 3px; height: 6px; border: solid #111; border-width: 0 2px 2px 0; transform: rotate(40deg); }
.combo.off { background: #ece9d8; color: #aca899; }
.swatch { flex: none; width: 40px; height: 25px; background: #000; border: 2px solid #888; }
.fmt { flex: none; width: 40px; height: 25px; }
.buttons { display: flex; gap: 7px; padding: 32px 0 0 11px; font-size: 10px; }
.buttons .push { width: 76px; height: 26px; }
.push.strong { font-weight: bold; }

.line { position: absolute; z-index: 5; display: grid; align-items: center; height: 22px; white-space: pre; }
.body { font: 17px "Liberation Serif", serif; }
.caption { font: 14px "Liberation Serif", serif; color: #222; }
.line .box { font-family: "DejaVu Sans", sans-serif; font-size: 15px; color: #333; }
.caption .box { font-size: 13px; }
.mono { font-family: "Liberation Mono", monospace; font-size: 14px; }
.sans { font-family: "Liberation Sans", sans-serif; font-size: 16px; }
.c437 { left: 239px; top: 300px; grid-template-columns: 18px 32px 33px 25px auto; }
.l-create { left: 35px; top: 322px; grid-template-columns: 38px 172px 14px 66px 34px 6px auto; }
.l-rtf { left: 35px; top: 348px; grid-template-columns: 8px 134px 34px auto; }
.c438 { left: 265px; top: 328px; grid-template-columns: 18px 32px auto; }
.l-a { left: 35px; top: 351px; }
.l-b { left: 35px; top: 376px; grid-template-columns: 8px auto; }
.l-c { left: 31px; top: 401px; grid-template-columns: 8px 25px 160px 82px 169px auto; }
.l-d { left: 31px; top: 426px; grid-template-columns: 6px 39px 41px auto; }
.folio { margin: 237px 0 77px -139px; text-align: center; font: 13px "Liberation Serif", serif; }
```
